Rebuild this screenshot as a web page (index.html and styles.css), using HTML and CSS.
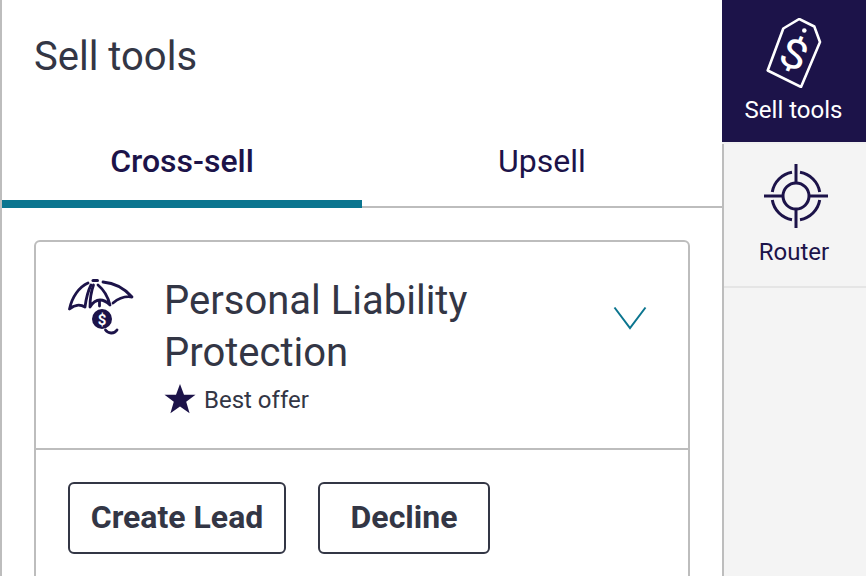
FILE: index.html
```html
<!DOCTYPE html>
<html lang="en">
<head>
<meta charset="utf-8">
<title>Sell tools</title>
<link rel="stylesheet" href="styles.css">
</head>
<body>
<div class="app">
  <main class="panel">
    <h1 class="panel-title">Sell tools</h1>
    <div class="tabs">
      <div class="tab tab-active">Cross-sell</div>
      <div class="tab">Upsell</div>
    </div>
    <section class="card">
      <div class="card-head">
        <svg class="umbrella" width="66" height="60" viewBox="0 0 66 60" fill="none" stroke="#1c1349" stroke-width="2.800" stroke-linecap="round" stroke-linejoin="round">
          <path d="M25 4.500h4.500" stroke-width="3"/>
          <path d="M20 7C11 11 4 21 1.500 33C6 29 12 28 17 31C18 23 20 15 23 9"/>
          <path d="M25.500 9C23 16 22 24 22 31C25 26 28 24 32 24C36 24 39 26 42 29C40 21 36 14 30 9"/>
          <path d="M35 6C47 7 57 13 64 21C58 20 51 22 45 27"/>
          <path d="M31.500 25V30"/>
          <circle cx="34" cy="43" r="10" fill="#1c1349" stroke="none"/>
          <path d="M37.500 54C40 57.500 46 58.500 49 54"/>
          <text x="34" y="48.500" class="umbrella-dollar" text-anchor="middle">$</text>
        </svg>
        <div class="card-text">
          <h2 class="card-title">Personal Liability Protection</h2>
          <div class="badge">
            <svg class="star" width="32" height="30" viewBox="0 0 32 30"><path fill="#1c1349" d="M16 0l4 10.800h11.500l-9.300 7 3.400 11.400L16 22.500 6.400 29.200l3.400-11.400-9.300-7H12z"/></svg>
            <span>Best offer</span>
          </div>
        </div>
        <svg class="chevron" width="34" height="24" viewBox="0 0 34 24" fill="none" stroke="#0b758f" stroke-width="2"><path d="M1.500 1.500L17 22 32.500 1.500"/></svg>
      </div>
      <div class="card-actions">
        <button class="btn btn-lead">Create Lead</button>
        <button class="btn btn-decline">Decline</button>
      </div>
    </section>
  </main>
  <aside class="rail">
    <div class="rail-item rail-active">
      <svg width="56" height="70" viewBox="0 0 56 70" fill="none" stroke="#fff" stroke-width="2.600" stroke-linejoin="round">
        <path d="M33.300 1L48.300 8.500 54 24 35 69 1.700 52.500 17.300 10.500Z"/>
        <circle cx="38.300" cy="12.500" r="2.300" fill="#fff" stroke="none"/>
        <text x="0" y="14" class="tag-dollar" transform="translate(28 36) rotate(22) scale(1.200 1)" text-anchor="middle">$</text>
      </svg>
      <span class="rail-label">Sell tools</span>
    </div>
    <div class="rail-item">
      <svg class="router-icon" width="64" height="64" viewBox="0 0 64 64" fill="none" stroke="#1c1349" stroke-width="3">
        <circle cx="32" cy="32" r="13"/>
        <path d="M28 8.300A24 24 0 0 0 8.300 28M36 8.300A24 24 0 0 1 55.700 28M28 55.700A24 24 0 0 1 8.300 36M36 55.700A24 24 0 0 0 55.700 36"/>
        <path d="M32 0V19M32 45V64M0 32H19M45 32H64"/>
      </svg>
      <span class="rail-label">Router</span>
    </div>
  </aside>
</div>
</body>
</html>
```

FILE: styles.css
```css
* { box-sizing: border-box; }
html, body { margin: 0; height: 100%; overflow: hidden; background: #fff; }
body { font-family: Roboto, sans-serif; color: #333645; }
.app { display: flex; width: 866px; height: 576px; }
.panel { width: 722px; flex: none; border-left: 2px solid #bdbdbd; }
.panel-title { margin: 0; padding: 36px 0 0 32px; height: 126px; font-size: 40px; line-height: 42px; font-weight: 400; }
.tabs { display: flex; height: 82px; border-bottom: 2px solid #bdbdbd; }
.tab { width: 360px; margin-bottom: -2px; padding-top: 17px; text-align: center; font-size: 32px; line-height: 36px; color: #1c1349; }
.tab-active { font-weight: 500; border-bottom: 8px solid #0b758f; }
.card { margin: 32px 32px 0; width: 656px; border: 2px solid #bdbdbd; border-radius: 6px; }
.card-head { position: relative; display: flex; gap: 30px; height: 208px; padding: 34px 32px 0; border-bottom: 2px solid #bdbdbd; }
.umbrella { flex: none; }
.umbrella-dollar { font: 700 15px Roboto, sans-serif; fill: #fff; stroke: none; }
.card-text { width: 400px; margin-top: -1px; }
.card-title { margin: 0; font-size: 40px; line-height: 52px; font-weight: 400; }
.badge { display: flex; align-items: center; gap: 8px; margin-top: 6px; font-size: 24px; line-height: 30px; }
.star { flex: none; margin-top: -3px; }
.chevron { position: absolute; right: 41px; top: 64px; }
.card-actions { display: flex; gap: 32px; padding: 32px 32px 0; height: 140px; }
.btn { height: 72px; padding: 0 0 2px; background: #fff; border: 2px solid #333645; border-radius: 6px; font: 700 32px Roboto, sans-serif; color: #333645; }
.btn-lead { width: 218px; }
.btn-decline { width: 172px; }
.rail { flex: 1; background: #f4f4f4; border-left: 2px solid #bdbdbd; }
.rail-item { display: flex; flex-direction: column; align-items: center; height: 144px; padding-top: 20px; border-bottom: 2px solid #e5e5e5; color: #1c1349; }
.rail-active { margin-left: -2px; background: #1c1349; color: #fff; padding-top: 18px; border-bottom: 2px solid #f0f0f0; }
.tag-dollar { font: 400 40px Roboto, sans-serif; fill: #fff; stroke: none; }
.rail-label { font-size: 24px; line-height: 30px; margin-top: 9px; padding-right: 2px; }
.rail-active .rail-label { margin-top: 7px; padding-right: 1px; }
.router-icon { position: relative; left: 1px; }
```
